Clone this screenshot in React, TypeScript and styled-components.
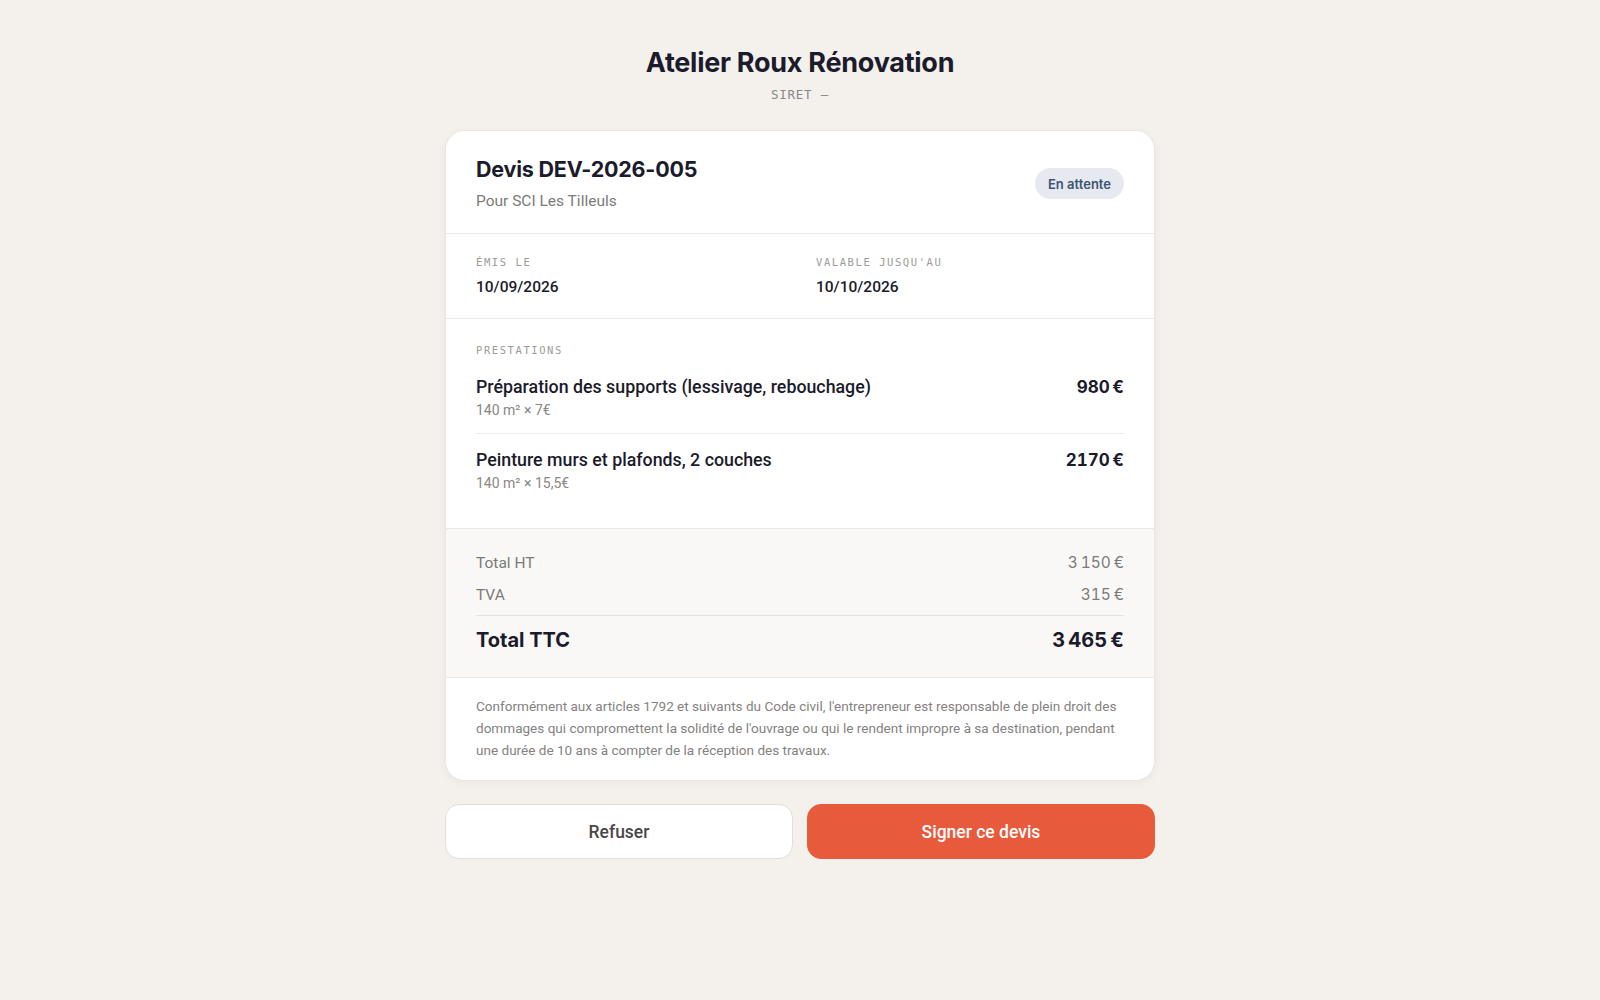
import React from "react";
import styled, { createGlobalStyle } from "styled-components";

const Global = createGlobalStyle`
  * { box-sizing: border-box; }
  html, body { margin: 0; padding: 0; }
  body {
    background: #f4f0ec;
    font-family: Roboto, "Noto Sans", sans-serif;
    color: #1b1b2b;
    -webkit-font-smoothing: antialiased;
  }
`;

const Page = styled.main`
  min-height: 1000px;
  display: flex;
  flex-direction: column;
  align-items: center;
  padding: 46px 20px 60px;
`;

const Brand = styled.header`
  display: flex;
  flex-direction: column;
  align-items: center;
  gap: 6px;
  margin-bottom: 26px;
`;

const BrandName = styled.h1`
  margin: 0;
  font-family: Inter, Roboto, sans-serif;
  font-size: 27px;
  line-height: 34px;
  font-weight: 700;
  letter-spacing: -0.01em;
  color: #1b1b2b;
`;

const Siret = styled.div`
  font-family: "DejaVu Sans Mono", "Liberation Mono", monospace;
  font-size: 12.5px;
  line-height: 18px;
  letter-spacing: 0.06em;
  color: #8a8784;
`;

const Card = styled.section`
  width: 710px;
  background: #ffffff;
  border: 1px solid #ebe6e1;
  border-radius: 20px;
  box-shadow: 0 2px 8px rgba(60, 40, 20, 0.05);
  overflow: hidden;
`;

const Section = styled.div<{ $tinted?: boolean; $pad?: string }>`
  padding: ${(p) => p.$pad ?? "22px 30px"};
  background: ${(p) => (p.$tinted ? "#faf8f6" : "#ffffff")};
  & + & {
    border-top: 1px solid #ece8e4;
  }
`;

const HeaderRow = styled.div`
  display: flex;
  align-items: center;
  justify-content: space-between;
`;

const TitleBlock = styled.div`
  display: flex;
  flex-direction: column;
  gap: 7px;
`;

const QuoteTitle = styled.h2`
  margin: 0;
  font-family: Inter, Roboto, sans-serif;
  font-size: 21.5px;
  line-height: 28px;
  font-weight: 700;
  letter-spacing: -0.01em;
  color: #1b1b2b;
`;

const Subtitle = styled.div`
  font-size: 15.5px;
  line-height: 22px;
  color: #7c7a78;
`;

const Badge = styled.span`
  display: inline-flex;
  align-items: center;
  height: 31px;
  padding: 0 13px;
  border-radius: 999px;
  background: #e6eaf0;
  color: #3d5575;
  font-family: Inter, Roboto, sans-serif;
  font-size: 13px;
  font-weight: 600;
`;

const DateGrid = styled.div`
  display: grid;
  grid-template-columns: 1fr 1fr;
  column-gap: 32px;
`;

const Field = styled.div`
  display: flex;
  flex-direction: column;
  gap: 8px;
`;

const Label = styled.div`
  font-family: "DejaVu Sans Mono", "Liberation Mono", monospace;
  font-size: 10.5px;
  line-height: 14px;
  letter-spacing: 0.15em;
  text-transform: uppercase;
  color: #9d9a97;
`;

const FieldValue = styled.div`
  font-size: 15.5px;
  line-height: 20px;
  font-weight: 500;
  color: #1b1b2b;
`;

const Items = styled.div`
  display: flex;
  flex-direction: column;
  margin-top: 4px;
`;

const Item = styled.div`
  display: flex;
  justify-content: space-between;
  align-items: flex-start;
  padding: 14px 0;
  & + & {
    border-top: 1px solid #eeeae6;
  }
`;

const ItemText = styled.div`
  display: flex;
  flex-direction: column;
  gap: 2px;
`;

const ItemName = styled.div`
  font-size: 17.8px;
  line-height: 24px;
  font-weight: 500;
  color: #1b1b2b;
`;

const ItemMeta = styled.div`
  font-size: 14px;
  line-height: 18px;
  color: #8a8784;
`;

const Amount = styled.div<{ $size?: number; $weight?: number; $muted?: boolean }>`
  font-family: Inter, Roboto, sans-serif;
  font-size: ${(p) => p.$size ?? 17}px;
  font-weight: ${(p) => p.$weight ?? 700};
  line-height: 24px;
  color: ${(p) => (p.$muted ? "#7c7a78" : "#1b1b2b")};
  white-space: nowrap;
  font-variant-numeric: tabular-nums;
`;

const TotalRow = styled.div<{ $grand?: boolean }>`
  display: flex;
  justify-content: space-between;
  align-items: center;
  height: ${(p) => (p.$grand ? 28 : 24)}px;
  & + & {
    margin-top: 8px;
  }
  ${(p) =>
    p.$grand &&
    `
    margin-top: 8px !important;
    padding-top: 10px;
    height: 39px;
    border-top: 1px solid #e6e2de;
  `}
`;

const TotalLabel = styled.div<{ $grand?: boolean }>`
  font-family: ${(p) => (p.$grand ? "Inter, Roboto, sans-serif" : "Roboto, sans-serif")};
  font-size: ${(p) => (p.$grand ? 20 : 15.5)}px;
  font-weight: ${(p) => (p.$grand ? 700 : 400)};
  color: ${(p) => (p.$grand ? "#1b1b2b" : "#7c7a78")};
`;

const Legal = styled.p`
  margin: 0;
  font-size: 13.55px;
  line-height: 22px;
  color: #85827f;
`;

const Actions = styled.div`
  width: 710px;
  display: grid;
  grid-template-columns: 1fr 1fr;
  gap: 14px;
  margin-top: 23px;
`;

const Button = styled.button<{ $primary?: boolean }>`
  height: 55px;
  border-radius: 14px;
  font-family: Roboto, sans-serif;
  font-size: 17.5px;
  font-weight: 500;
  cursor: pointer;
  border: 1px solid ${(p) => (p.$primary ? "#e85a3c" : "#e3ded9")};
  background: ${(p) => (p.$primary ? "#e85a3c" : "#ffffff")};
  color: ${(p) => (p.$primary ? "#ffffff" : "#4a4846")};
`;

const items = [
  { name: "Préparation des supports (lessivage, rebouchage)", meta: "140 m² × 7€", amount: "980\u202f€" },
  { name: "Peinture murs et plafonds, 2 couches", meta: "140 m² × 15,5€", amount: "2170\u202f€" },
];

export default function App() {
  return (
    <>
      <Global />
      <Page>
        <Brand>
          <BrandName>Atelier Roux Rénovation</BrandName>
          <Siret>SIRET —</Siret>
        </Brand>
        <Card>
          <Section $pad="24px 30px 21px">
            <HeaderRow>
              <TitleBlock>
                <QuoteTitle>Devis DEV-2026-005</QuoteTitle>
                <Subtitle>Pour SCI Les Tilleuls</Subtitle>
              </TitleBlock>
              <Badge>En attente</Badge>
            </HeaderRow>
          </Section>
          <Section $pad="21px 30px 21px">
            <DateGrid>
              <Field>
                <Label>Émis le</Label>
                <FieldValue>10/09/2026</FieldValue>
              </Field>
              <Field>
                <Label>Valable jusqu'au</Label>
                <FieldValue>10/10/2026</FieldValue>
              </Field>
            </DateGrid>
          </Section>
          <Section $pad="24px 30px 22px">
            <Label>Prestations</Label>
            <Items>
              {items.map((it) => (
                <Item key={it.name}>
                  <ItemText>
                    <ItemName>{it.name}</ItemName>
                    <ItemMeta>{it.meta}</ItemMeta>
                  </ItemText>
                  <Amount>{it.amount}</Amount>
                </Item>
              ))}
            </Items>
          </Section>
          <Section $tinted $pad="22px 30px 23px">
            <TotalRow>
              <TotalLabel>Total HT</TotalLabel>
              <Amount $size={15.5} $weight={400} $muted>3{"\u202f"}150{"\u202f"}€</Amount>
            </TotalRow>
            <TotalRow>
              <TotalLabel>TVA</TotalLabel>
              <Amount $size={15.5} $weight={400} $muted>315{"\u202f"}€</Amount>
            </TotalRow>
            <TotalRow $grand>
              <TotalLabel $grand>Total TTC</TotalLabel>
              <Amount $size={20}>3{"\u202f"}465{"\u202f"}€</Amount>
            </TotalRow>
          </Section>
          <Section $pad="17px 30px 19px">
            <Legal>
              Conformément aux articles 1792 et suivants du Code civil, l'entrepreneur est responsable de plein droit des
              dommages qui compromettent la solidité de l'ouvrage ou qui le rendent impropre à sa destination, pendant
              une durée de 10 ans à compter de la réception des travaux.
            </Legal>
          </Section>
        </Card>
        <Actions>
          <Button>Refuser</Button>
          <Button $primary>Signer ce devis</Button>
        </Actions>
      </Page>
    </>
  );
}
